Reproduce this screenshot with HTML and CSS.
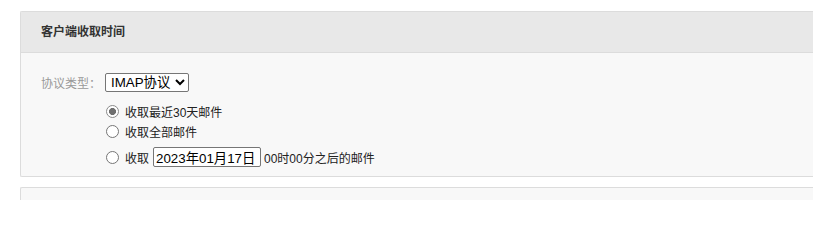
FILE: index.html
```html
<!DOCTYPE html>
<html lang="zh-CN">
<head>
<meta charset="utf-8">
<link rel="stylesheet" href="styles.css">
</head>
<body>
<div class="page">
  <div class="panel">
    <div class="panel-head">客户端收取时间</div>
    <div class="panel-body">
      <div class="row proto">
        <span class="label">协议类型：</span>
        <select class="sel"><option>IMAP协议</option><option>POP3协议</option></select>
      </div>
      <div class="opts">
        <label class="opt"><input class="radio" type="radio" name="r" checked><span>收取最近30天邮件</span></label>
        <label class="opt"><input class="radio" type="radio" name="r"><span>收取全部邮件</span></label>
        <label class="opt opt-date"><input class="radio" type="radio" name="r"><span>收取</span><input class="date" type="text" value="2023年01月17日"><span>00时00分之后的邮件</span></label>
      </div>
    </div>
  </div>
  <div class="panel panel2"></div>
</div>
</body>
</html>
```
FILE: styles.css
```css
html, body { margin: 0; padding: 0; background: #fff; }
body { height: 200px; overflow: hidden; font-family: "Liberation Sans", "Noto Sans CJK SC", sans-serif; font-size: 12px; color: #333; }
.page { padding: 11px 0 0 20px; }
.panel { border: 1px solid #dcdcdc; border-right: 0; border-radius: 2px 0 0 2px; background: #f8f8f8; }
.panel-head { height: 40px; line-height: 40px; background: #e8e8e8; border-bottom: 1px solid #dcdcdc; padding-left: 20px; font-weight: bold; font-size: 12px; color: #333; }
.panel-body { height: 123px; box-sizing: border-box; padding: 19px 0 0 20px; }
.row { display: flex; align-items: center; height: 20px; }
.label { color: #999; width: 64px; }
.sel { height: 19px; width: 84px; margin: 0; padding: 0 0 0 1px; font-family: "Liberation Sans", "Noto Sans CJK SC", sans-serif; font-size: 13.33px; color: #000; border: 1px solid #767676; border-radius: 2px; background: #fff; }
.opts { padding-left: 64px; margin-top: 9px; display: flex; flex-direction: column; }
.opt { display: flex; align-items: center; height: 20px; color: #222; }
.radio { appearance: none; -webkit-appearance: none; box-sizing: border-box; width: 13px; height: 13px; margin: 0 6px 0 1px; border: 1px solid #767676; border-radius: 50%; background: #fff; position: relative; }
.radio:checked { border-color: #8a8a8a; background: radial-gradient(circle, #6f6f6f 0 3.2px, #fff 3.8px); }
.opt-date { margin-top: 6px; }
.date { width: 108px; height: 20px; box-sizing: border-box; margin: 0 3px 0 4px; padding: 1px 2px; font-family: "Liberation Sans", "Noto Sans CJK SC", sans-serif; font-size: 13.33px; color: #000; border: 1px solid #767676; border-radius: 2px; }
.panel2 { margin-top: 10px; height: 40px; }
```
